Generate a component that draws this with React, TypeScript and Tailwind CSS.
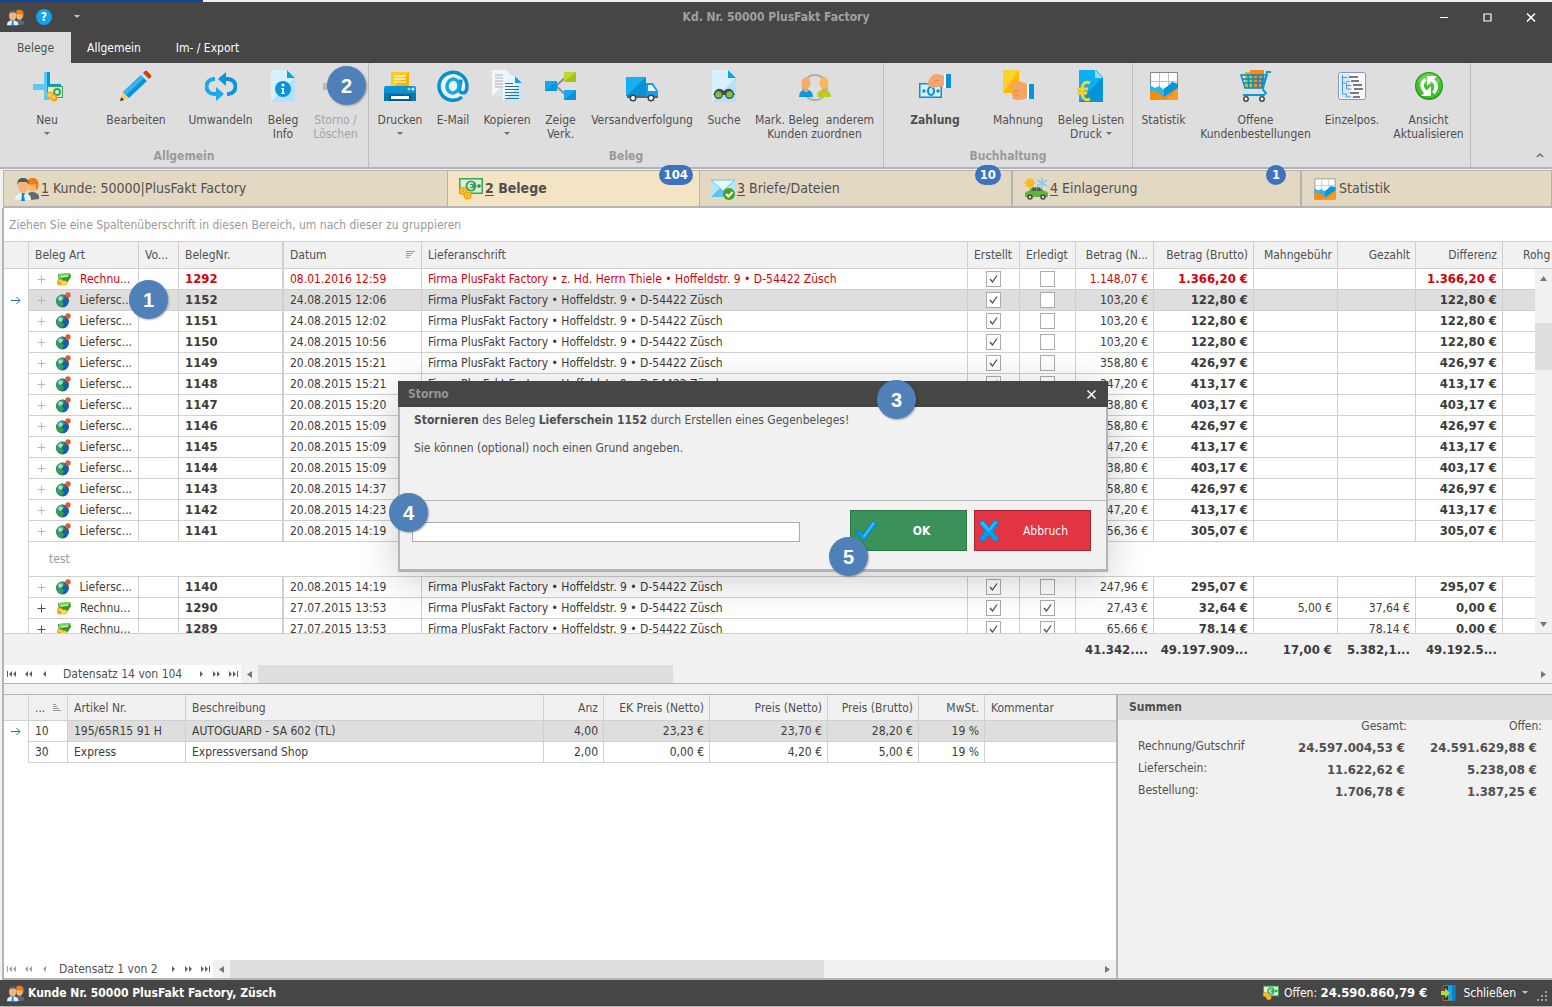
import type { ReactNode } from "react";

type Beleg = {
  art: "L" | "R";
  nr: string;
  datum: string;
  anschrift?: string;
  erledigt?: boolean;
  netto: string;
  brutto: string;
  mahn?: string;
  gezahlt?: string;
  diff: string;
  red?: boolean;
  note?: string;
};

const ADDRESS = "Firma PlusFakt Factory • Hoffeldstr. 9 • D-54422 Züsch";

const belege: Beleg[] = [
  { art: "R", nr: "1292", datum: "08.01.2016 12:59", anschrift: "Firma PlusFakt Factory • z. Hd. Herrn Thiele • Hoffeldstr. 9 • D-54422 Züsch", netto: "1.148,07 €", brutto: "1.366,20 €", diff: "1.366,20 €", red: true },
  { art: "L", nr: "1152", datum: "24.08.2015 12:06", netto: "103,20 €", brutto: "122,80 €", diff: "122,80 €" },
  { art: "L", nr: "1151", datum: "24.08.2015 12:02", netto: "103,20 €", brutto: "122,80 €", diff: "122,80 €" },
  { art: "L", nr: "1150", datum: "24.08.2015 10:56", netto: "103,20 €", brutto: "122,80 €", diff: "122,80 €" },
  { art: "L", nr: "1149", datum: "20.08.2015 15:21", netto: "358,80 €", brutto: "426,97 €", diff: "426,97 €" },
  { art: "L", nr: "1148", datum: "20.08.2015 15:21", netto: "347,20 €", brutto: "413,17 €", diff: "413,17 €" },
  { art: "L", nr: "1147", datum: "20.08.2015 15:20", netto: "338,80 €", brutto: "403,17 €", diff: "403,17 €" },
  { art: "L", nr: "1146", datum: "20.08.2015 15:09", netto: "358,80 €", brutto: "426,97 €", diff: "426,97 €" },
  { art: "L", nr: "1145", datum: "20.08.2015 15:09", netto: "347,20 €", brutto: "413,17 €", diff: "413,17 €" },
  { art: "L", nr: "1144", datum: "20.08.2015 15:09", netto: "338,80 €", brutto: "403,17 €", diff: "403,17 €" },
  { art: "L", nr: "1143", datum: "20.08.2015 14:37", netto: "358,80 €", brutto: "426,97 €", diff: "426,97 €" },
  { art: "L", nr: "1142", datum: "20.08.2015 14:23", netto: "347,20 €", brutto: "413,17 €", diff: "413,17 €" },
  { art: "L", nr: "1141", datum: "20.08.2015 14:19", netto: "256,36 €", brutto: "305,07 €", diff: "305,07 €", note: "test" },
  { art: "L", nr: "1140", datum: "20.08.2015 14:19", netto: "247,96 €", brutto: "295,07 €", diff: "295,07 €" },
  { art: "R", nr: "1290", datum: "27.07.2015 13:53", erledigt: true, netto: "27,43 €", brutto: "32,64 €", mahn: "5,00 €", gezahlt: "37,64 €", diff: "0,00 €" },
  { art: "R", nr: "1289", datum: "27.07.2015 13:53", erledigt: true, netto: "65,66 €", brutto: "78,14 €", gezahlt: "78,14 €", diff: "0,00 €" },
];

const positionen = [
  ["10", "195/65R15 91 H", "AUTOGUARD - SA 602 (TL)", "4,00", "23,23 €", "23,70 €", "28,20 €", "19 %"],
  ["30", "Express", "Expressversand Shop", "2,00", "0,00 €", "4,20 €", "5,00 €", "19 %"],
];

const summen = [
  ["Rechnung/Gutschrif", "24.597.004,53 €", "24.591.629,88 €"],
  ["Lieferschein:", "11.622,62 €", "5.238,08 €"],
  ["Bestellung:", "1.706,78 €", "1.387,25 €"],
];

/* ---------- icons ---------- */

function Icon({ size = 32, box = 32, children }: { size?: number; box?: number; children: ReactNode }) {
  return (
    <svg width={size} height={size} viewBox={`0 0 ${box} ${box}`} className="shrink-0" aria-hidden="true">
      {children}
    </svg>
  );
}

function PeopleIcon({ size }: { size: number }) {
  return (
    <Icon size={size} box={24}>
      <path d="M12 20c0-4 3-5 5-5s7 1 7 5v2l-8 1z" fill="#5d6d75" />
      <ellipse cx="17.500" cy="9" rx="4.500" ry="6" fill="#f9b76f" />
      <path d="M12 6c0-4 3-5 6-5s6 2 5.500 7c0 3-1 5-2.500 5 .5-3 0-5-1-6-3 1-6 1-8-1z" fill="#f57c14" />
      <path d="M0 23c0-5 3-7 8-7s8 2 8 7z" fill="#e4f1fa" />
      <path d="M6.500 16h3.500l-1 2.500L10 24H6l1-5.500z" fill="#0b8ed0" />
      <ellipse cx="8" cy="9.500" rx="5" ry="6.500" fill="#f7b57c" />
      <path d="M2.500 8C2 3 4 1 8 1s6 2 5.500 7l-1.500-3c-3 0-6 0-8 0z" fill="#4a5a60" />
    </Icon>
  );
}

function MoneyIcon({ size }: { size: number }) {
  return (
    <Icon size={size} box={24}>
      <path d="M0 1h24v16H0z" fill="#3aa457" />
      <path d="M1.500 2.500h21v13h-21z" fill="#d8f0d4" />
      <circle cx="12" cy="9" r="5.500" fill="#3aa457" />
      <path d="M14 6.500a3 3 0 1 0 0 5M9 9h4" stroke="#fff" strokeWidth="1.300" fill="none" />
      <circle cx="20" cy="9" r="1.800" fill="#2c8a46" />
      <circle cx="4" cy="14" r="4" fill="#f6a609" />
      <circle cx="4" cy="14" r="2.500" fill="#fcd04a" />
      <circle cx="8.500" cy="18.500" r="4" fill="#f6a609" />
      <circle cx="8.500" cy="18.500" r="2.500" fill="#fcd04a" />
      <path d="M4 12.500v3M8.500 17v3" stroke="#e08a00" />
    </Icon>
  );
}

function ChartIcon({ size }: { size: number }) {
  return (
    <Icon size={size}>
      <path d="M2.500 2.500h27v27h-27z" fill="#fff" stroke="#7c8a94" />
      <path d="M11.500 3v15M20.500 3v15M3 11.500h26" stroke="#b7c3cc" />
      <path d="M2 15l5 3 4-2 4 3 5-3 4-4 6 2v13H2z" fill="#2fb3f0" />
      <path d="M2 21h6l4 3 4 3 6-3 4-4 4-2v12H2z" fill="#ff8c00" />
      <path d="M16 19l4-3 4-4 6 2v4l-5 3-4 2-5 4z" fill="#0995dd" />
      <path d="M18 30l12-12v12z" fill="#fa9d1c" />
    </Icon>
  );
}

function NeuIcon() {
  return (
    <Icon>
      <path d="M2 14h28v6H2z" fill="#5cc8f7" />
      <path d="M13 2h6v28h-6z" fill="#5cc8f7" />
      <path d="M16 2h3v12h11v3H16z" fill="#0596dd" />
      <path d="M16 16h16v12H16z" fill="#3aa457" />
      <path d="M17 17h14v10H17z" fill="#d8f0d4" />
      <circle cx="26" cy="22" r="4" fill="#3aa457" />
      <circle cx="26" cy="22" r="2" fill="#d8f0d4" />
      <circle cx="19" cy="25" r="3.500" fill="#f6b21a" />
      <circle cx="23" cy="28" r="3.500" fill="#f6a609" />
      <circle cx="22.500" cy="27.500" r="2" fill="#fcd04a" />
      <circle cx="19" cy="25" r="2" fill="#fcd04a" />
    </Icon>
  );
}

function PencilIcon() {
  return (
    <Icon>
      <path d="M0 31l3-9 6 6z" fill="#f6cf6b" />
      <path d="M0 31l1.200-4 3 3z" fill="#3d3d3d" />
      <path d="M3 22L21 5l6 6L9 28z" fill="#0b92d8" />
      <path d="M3 22L21 5l3 3L6 25z" fill="#35b6f2" />
      <path d="M21 5l2-2 6 6-2 2z" fill="#cfe0ea" />
      <path d="M23 3l2-2q1-1 2 0l4 4q1 1 0 2l-2 2z" fill="#c9410f" />
    </Icon>
  );
}

function ConvertIcon() {
  return (
    <Icon>
      <path d="M10 9H9a7 7 0 0 0 0 15h3" fill="none" stroke="#19a9f0" strokeWidth="4" />
      <path d="M20 9h3a7 7 0 0 1 0 15h-1" fill="none" stroke="#0a94dc" strokeWidth="4" />
      <path d="M13 9l8-7v14z" fill="#0a94dc" />
      <path d="M19 24l-8-7v14z" fill="#19a9f0" />
    </Icon>
  );
}

function InfoDocIcon() {
  return (
    <Icon>
      <path d="M4 0h17l7 7v25H4z" fill="#d9f1fd" />
      <path d="M28 7v25H4z" fill="#b2e2fa" />
      <path d="M20 0l8 8h-8z" fill="#12a0e8" />
      <circle cx="16" cy="19" r="8" fill="#0a94dc" />
      <circle cx="16" cy="15" r="1.500" fill="#fff" />
      <path d="M14 18h3v5h1v1h-4v-1h1v-4h-1z" fill="#fff" />
    </Icon>
  );
}

function MinusIcon() {
  return (
    <Icon>
      <path d="M3 13h26v7H3z" fill="#b9b9b9" />
    </Icon>
  );
}

function PrinterIcon() {
  return (
    <Icon>
      <path d="M7 2h18v16H7z" fill="#ffc91f" />
      <path d="M25 2v16H10z" fill="#f5b200" />
      <path d="M10 6h12M10 9h12M10 12h12" stroke="#fff3c4" strokeWidth="1.500" />
      <path d="M2 16h5v-2h18v2h5a2 2 0 0 1 2 2v13H0V18a2 2 0 0 1 2-2z" fill="#0793da" />
      <path d="M7 2h18v14H7z" fill="#ffc91f" />
      <path d="M25 2v14H11z" fill="#f5b200" />
      <path d="M10 6h12M10 9h12M10 12h12" stroke="#fff3c4" strokeWidth="1.500" />
      <path d="M0 23h32v8H0z" fill="#0877ae" />
      <path d="M5 25h22v6H5z" fill="#0a5a87" />
      <path d="M7 26h18v3H7z" fill="#fff" />
      <circle cx="25" cy="19" r="1.500" fill="#b6e04a" />
      <circle cx="29" cy="19" r="1.500" fill="#dff6ff" />
    </Icon>
  );
}

function AtIcon() {
  return (
    <Icon>
      <circle cx="16" cy="16" r="14" fill="#e8f6fd" />
      <path d="M25 27a14 14 0 1 1 5-11c0 5-2 7-4.500 7S22 21 22.500 18.500L24 9.500" fill="none" stroke="#0a8fd2" strokeWidth="3.500" />
      <ellipse cx="16" cy="16" rx="6" ry="7" fill="none" stroke="#1ba5e6" strokeWidth="3.500" transform="rotate(12 16 16)" />
    </Icon>
  );
}

function CopyIcon() {
  return (
    <Icon>
      <path d="M1 0h14l6 6v20H1z" fill="#f3f5f7" />
      <path d="M21 6v20H1z" fill="#dfe4e8" />
      <path d="M4 5h8M4 8h8M4 11h8M4 14h8M4 17h8" stroke="#a6afb5" />
      <path d="M12 6h13l6 6v20H12z" fill="#e8f7ff" />
      <path d="M31 12v20H12z" fill="#bfe8fb" />
      <path d="M24 6l7 7h-7z" fill="#12a0e8" />
      <path d="M14 13.500h8M14 16.500h14M14 19.500h14M14 22.500h14M14 25.500h14M14 28.500h14" stroke="#34718f" />
    </Icon>
  );
}

function TreeIcon() {
  return (
    <Icon>
      <path d="M22 6L11 16l11 10" fill="none" stroke="#8a8a8a" strokeWidth="2" />
      <path d="M0 11h12v10H0z" fill="#18a7ee" />
      <path d="M12 11v10H0z" fill="#0793da" />
      <path d="M19 2h12v10H19z" fill="#b9d92b" />
      <path d="M31 2v10H19z" fill="#a0c514" />
      <path d="M19 20h12v10H19z" fill="#18a7ee" />
      <path d="M31 20v10H19z" fill="#0793da" />
    </Icon>
  );
}

function TruckIcon() {
  return (
    <Icon>
      <path d="M0 7h20v19H0z" fill="#0793da" />
      <path d="M0 7h20L0 26z" fill="#18b0f3" />
      <path d="M20 13h7l5 8v6H20z" fill="#12a0e8" />
      <path d="M22 15h4l4 6h-8z" fill="#e5f6fe" />
      <path d="M1 26h31v2H1z" fill="#56646c" />
      <circle cx="7" cy="28" r="3.500" fill="#3b4449" />
      <circle cx="7" cy="28" r="2" fill="#fff" />
      <circle cx="25" cy="28" r="3.500" fill="#3b4449" />
      <circle cx="25" cy="28" r="2" fill="#fff" />
    </Icon>
  );
}

function SearchDocIcon() {
  return (
    <Icon>
      <path d="M4 0h17l7 7v25H4z" fill="#d9f1fd" />
      <path d="M28 7v25H4z" fill="#b2e2fa" />
      <path d="M20 0l8 8h-8z" fill="#12a0e8" />
      <path d="M8 20q4-3 8 1 4-4 8-1l3 5H5z" fill="#3e4c54" />
      <circle cx="10.500" cy="24.500" r="4.500" fill="#3e4c54" />
      <circle cx="21.500" cy="24.500" r="4.500" fill="#3e4c54" />
      <circle cx="10.500" cy="24.500" r="3.200" fill="#83bd3c" />
      <circle cx="21.500" cy="24.500" r="3.200" fill="#83bd3c" />
    </Icon>
  );
}

function AssignIcon() {
  return (
    <Icon>
      <ellipse cx="16" cy="17.500" rx="12" ry="12.500" fill="none" stroke="#adadad" strokeWidth="2" />
      <path d="M0 27q0-6 5-7h4q5 1 5 7z" fill="#0c98de" />
      <path d="M18 27q0-6 5-7h4q5 1 5 7z" fill="#b4cf1f" />
      <path d="M5 17h4v5H5zM23 17h4v5h-4z" fill="#ef9e57" />
      <ellipse cx="7" cy="13" rx="4.500" ry="6" fill="#f6ad6b" />
      <ellipse cx="25" cy="13" rx="4.500" ry="6" fill="#f6b85c" />
    </Icon>
  );
}

function PaymentIcon() {
  return (
    <Icon>
      <path d="M0 13h23v15H0z" fill="#0d8fcb" />
      <path d="M1.500 14.500h20v12h-20z" fill="#d7effa" />
      <ellipse cx="12" cy="21" rx="4" ry="5" fill="#0d8fcb" />
      <ellipse cx="12" cy="21" rx="2" ry="3" fill="#d7effa" />
      <circle cx="5" cy="21" r="1.700" fill="#0d8fcb" />
      <circle cx="19" cy="21" r="1.700" fill="#0d8fcb" />
      <path d="M8 15q3-10 9-11 5 0 8 2v9q-3 2-7 2l-5 1q-2 0-1-3-2 2-4 0z" fill="#f2a86b" />
      <path d="M13 15l4-5 3 1" fill="none" stroke="#de8a48" />
      <path d="M25 4h2v14h-2z" fill="#fff" />
      <path d="M27 4h5v14h-5z" fill="#0793da" />
    </Icon>
  );
}

function ReminderIcon() {
  return (
    <Icon>
      <path d="M1 0h16v23H1z" fill="#fdb900" />
      <path d="M17 0L1 23V0z" fill="#fdd02a" />
      <path d="M8 14l8-3q8 2 11 4v11q-4 4-10 4-7 0-7-3l3-2h-3q-2-3 1-4h4q-4-3-7-3z" fill="#f4a564" />
      <path d="M11 21h6M10 25h7" stroke="#de8a48" />
      <path d="M25 14h2v15h-2z" fill="#fff" />
      <path d="M27 14h5v15h-5z" fill="#0793da" />
    </Icon>
  );
}

function EuroDocIcon() {
  return (
    <Icon>
      <path d="M4 0h17l7 7v25H4z" fill="#0bb0f2" />
      <path d="M28 7v25H4z" fill="#0793da" />
      <path d="M20 0l8 8h-8z" fill="#9cdcf8" />
      <path d="M15 13q-8-3-8 8t8 8M2 19h11M2 23h10" fill="none" stroke="#ffd21f" strokeWidth="3" />
    </Icon>
  );
}

function CartIcon() {
  return (
    <Icon>
      <path d="M5 2h9v16H5z" fill="#9ad04a" />
      <path d="M10 0h14v18H10z" fill="#f58a1f" />
      <path d="M5 6h8v12H6z" fill="#9ad04a" />
      <path d="M1 5h26l-4 13H5zM3 9h23M4 13h21M8 5l1 13M13 5v13M18 5v13M23 5l-1 13" fill="none" stroke="#0e86c2" strokeWidth="1.500" />
      <path d="M31 2h-4l-4 16q0 3 2 4t-1 3H3" fill="none" stroke="#0a98dd" strokeWidth="2" />
      <circle cx="6" cy="29" r="2.200" fill="#fff" stroke="#444" strokeWidth="1.500" />
      <circle cx="22" cy="29" r="2.200" fill="#fff" stroke="#444" strokeWidth="1.500" />
    </Icon>
  );
}

function ListIcon() {
  return (
    <Icon>
      <rect x="2.500" y="2.500" width="27" height="27" rx="2" fill="#f8fbff" stroke="#7e97c3" />
      <path d="M4 4h10v24H4z" fill="#d6e8fb" />
      <path d="M6.500 5v19h4M6.500 7.500h5M6.500 13h4v6h5M10.500 11.500h3M10.500 15.500h5M10.500 24v3h5" fill="none" stroke="#4f9fe0" />
      <path d="M13 7h9M15 11h8M17 15h9M18 19h9M14 23h9M17 27h7" stroke="#7b7b7b" strokeWidth="2" />
    </Icon>
  );
}

function RefreshIcon() {
  return (
    <Icon>
      <circle cx="16" cy="16" r="14" fill="#1f9c1a" />
      <circle cx="16" cy="15.500" r="12.800" fill="#43c02a" />
      <path d="M5 12a11.500 11.500 0 0 1 22 0q-11 6-22 0z" fill="#8be36d" opacity=".5" />
      <path d="M12.500 9q-7 6 0 13" fill="none" stroke="#fff" strokeWidth="3.500" />
      <path d="M8 26h10V16z" fill="#fff" />
      <path d="M20.500 23q6-7-1-13" fill="none" stroke="#fff" strokeWidth="3.500" />
      <path d="M24 6H14v10z" fill="#fff" />
    </Icon>
  );
}

function MailIcon() {
  return (
    <Icon size={24} box={24}>
      <path d="M0 3h24v17H0z" fill="#b6e6fc" />
      <path d="M0 20l9-9h6l9 9z" fill="#5cc3f3" />
      <path d="M0 3h24L12 14z" fill="#e8f8ff" stroke="#67c3ee" />
      <circle cx="18" cy="17" r="6" fill="#4ba31f" />
      <path d="M15 17l2.500 2.500L21.500 15" fill="none" stroke="#fff" strokeWidth="2" />
    </Icon>
  );
}

function CarIcon() {
  return (
    <Icon size={24} box={24}>
      <circle cx="6" cy="6" r="4" fill="#fdb813" />
      <path d="M6 0v12M0 6h12M2 2l8 8M10 2l-8 8" stroke="#fdb813" />
      <path d="M18 0v11M13 3l10 6M23 3l-10 6" stroke="#86cdf0" strokeWidth="1.500" />
      <path d="M1 16q1-2 4-2l3-4h8l4 4q4 0 4 3v3H1z" fill="#5fb53a" />
      <path d="M7 14l2-3h3v3zM13 11h2.500l3 3H13z" fill="#4b5a60" />
      <circle cx="6" cy="20" r="2.800" fill="#4b4b4b" />
      <circle cx="19" cy="20" r="2.800" fill="#4b4b4b" />
      <circle cx="6" cy="20" r="1.200" fill="#ddd" />
      <circle cx="19" cy="20" r="1.200" fill="#ddd" />
    </Icon>
  );
}

function GlobeIcon() {
  return (
    <Icon size={16} box={16}>
      <circle cx="6.500" cy="9" r="6.500" fill="#1560ad" />
      <path d="M1 6q3-4 6-3.500l2 3-4 3 3 3-2 3.500Q0 13 0 9z" fill="#35a04a" />
      <circle cx="4.500" cy="6.500" r="2.300" fill="#c9efff" opacity=".75" />
      <circle cx="12" cy="3" r="2.700" fill="#dd5b31" />
      <path d="M11 5L9 8" stroke="#b03a1c" />
    </Icon>
  );
}

function InvoiceIcon() {
  return (
    <Icon size={16} box={16}>
      <path d="M2 3l12-1 1 4-4 6-8-1z" fill="#2f9a25" />
      <path d="M3 3l11-1-2 4-9 1z" fill="#7bd85a" />
      <path d="M5 6l7-1" stroke="#e2ffd6" />
      <ellipse cx="4" cy="11" rx="3" ry="3.500" fill="#e2a90c" />
      <ellipse cx="8" cy="12" rx="3.500" ry="2.500" fill="#f3c832" />
      <path d="M2 10h4M6 12h4" stroke="#fff0a0" />
    </Icon>
  );
}

function DoorIcon() {
  return (
    <Icon size={16} box={16}>
      <path d="M2 .5h12v15H2z" fill="#3b3b3b" stroke="#a8622a" />
      <path d="M7 1l7-1v16l-7-1z" fill="#12a5ee" />
      <path d="M11 0h3v16h-3z" fill="#0a84c6" />
      <path d="M0 6h4V3l5 5-5 5v-3H0z" fill="#b9d92b" />
    </Icon>
  );
}

function Caret({ light = false }: { light?: boolean }) {
  return (
    <svg width="6" height="4" viewBox="0 0 6 4" className={light ? "text-[#c8c8c8]" : "text-[#6e6e6e]"} aria-hidden="true">
      <path d="M0 0h6L3 3z" fill="currentColor" />
    </svg>
  );
}

function RowArrow() {
  return (
    <svg width="10" height="9" viewBox="0 0 10 9" className="mx-auto" aria-hidden="true">
      <path d="M0 4.500h9M5.500 1L9 4.500 5.500 8" fill="none" stroke="#2a72b8" />
    </svg>
  );
}

/* ---------- ribbon ---------- */

function RibbonButton({
  icon,
  lines,
  className,
  caret,
  bold,
  disabled,
}: {
  icon: ReactNode;
  lines: string[];
  className: string;
  caret?: boolean;
  bold?: boolean;
  disabled?: boolean;
}) {
  return (
    <button
      disabled={disabled}
      className={`${className} flex shrink-0 flex-col items-center pt-[7px] leading-[14px] whitespace-pre ${bold ? "font-bold" : ""} ${disabled ? "text-[#a3a3a3]" : "text-[#505050]"}`}
    >
      {icon}
      <span className="mt-[11px]">{lines[0]}</span>
      {lines[1] ? (
        <span className="flex items-center gap-1">
          {lines[1]}
          {caret && <Caret />}
        </span>
      ) : (
        caret && <span className="mt-[5px]"><Caret /></span>
      )}
    </button>
  );
}

function RibbonGroup({ label, children }: { label?: string; children: ReactNode }) {
  return (
    <section className="flex shrink-0 flex-col justify-between border-r border-[#bdbdbd]">
      <div className="flex">{children}</div>
      <div className="h-[18px] text-center leading-[14px] font-bold text-[#9a9a9a]">{label}</div>
    </section>
  );
}

function Ribbon() {
  return (
    <div className="relative flex h-[104px] overflow-hidden bg-[#dedede]">
      <RibbonGroup label="Allgemein">
        <RibbonButton className="w-[94px]" icon={<NeuIcon />} lines={["Neu"]} caret />
        <RibbonButton className="w-[84px]" icon={<PencilIcon />} lines={["Bearbeiten"]} />
        <RibbonButton className="w-[85px]" icon={<ConvertIcon />} lines={["Umwandeln"]} />
        <RibbonButton className="w-[40px]" icon={<InfoDocIcon />} lines={["Beleg", "Info"]} />
        <RibbonButton className="w-[65px]" icon={<MinusIcon />} lines={["Storno /", "Löschen"]} disabled />
      </RibbonGroup>
      <RibbonGroup label="Beleg">
        <RibbonButton className="w-[62px]" icon={<PrinterIcon />} lines={["Drucken"]} caret />
        <RibbonButton className="w-[44px]" icon={<AtIcon />} lines={["E-Mail"]} />
        <RibbonButton className="w-[64px]" icon={<CopyIcon />} lines={["Kopieren"]} caret />
        <RibbonButton className="w-[43px]" icon={<TreeIcon />} lines={["Zeige", "Verk."]} />
        <RibbonButton className="w-[120px]" icon={<TruckIcon />} lines={["Versandverfolgung"]} />
        <RibbonButton className="w-[44px]" icon={<SearchDocIcon />} lines={["Suche"]} />
        <RibbonButton className="w-[137px]" icon={<AssignIcon />} lines={["Mark. Beleg  anderem", "Kunden zuordnen"]} />
      </RibbonGroup>
      <RibbonGroup label="Buchhaltung">
        <RibbonButton className="w-[102px]" icon={<PaymentIcon />} lines={["Zahlung"]} bold />
        <RibbonButton className="w-[64px]" icon={<ReminderIcon />} lines={["Mahnung"]} />
        <RibbonButton className="w-[82px]" icon={<EuroDocIcon />} lines={["Beleg Listen", "Druck"]} caret />
      </RibbonGroup>
      <RibbonGroup>
        <RibbonButton className="w-[61px]" icon={<ChartIcon size={32} />} lines={["Statistik"]} />
        <RibbonButton className="w-[123px]" icon={<CartIcon />} lines={["Offene", "Kundenbestellungen"]} />
        <RibbonButton className="w-[70px]" icon={<ListIcon />} lines={["Einzelpos."]} />
        <RibbonButton className="w-[83px]" icon={<RefreshIcon />} lines={["Ansicht", "Aktualisieren"]} />
      </RibbonGroup>
      <button className="ml-auto self-end p-2 pb-[10px]" aria-label="Menüband minimieren">
        <svg width="8" height="5" viewBox="0 0 8 5">
          <path d="M0 5l4-4 4 4H6L4 3 2 5z" fill="#6e6e6e" />
        </svg>
      </button>
    </div>
  );
}

/* ---------- page tabs ---------- */

function PageTab({
  icon,
  num,
  label,
  badge,
  active,
  className,
  badgeClass = "",
}: {
  icon: ReactNode;
  num?: string;
  label: string;
  badge?: string;
  active?: boolean;
  className: string;
  badgeClass?: string;
}) {
  return (
    <button
      className={`${className} relative flex items-center gap-[2px] border-t border-b-2 border-[#b4b4b4] pl-[11px] text-[14px] text-[#505050] ${active ? "bg-[#f5e4c3] font-bold" : "bg-[#e3d8c2]"}`}
    >
      {icon}
      <span>
        {num && <span className="underline underline-offset-2">{num}</span>}
        {num && " "}
        {label}
      </span>
      {badge && (
        <span className={`absolute -top-[6px] grid h-5 min-w-5 place-items-center rounded-full bg-[#3c72c0] px-[5px] text-[13px] font-bold text-white ${badgeClass}`}>
          {badge}
        </span>
      )}
    </button>
  );
}

/* ---------- grids ---------- */

const th = "border-r border-b border-[#d0d0d0] bg-[#f1f1f1] px-[6px] font-normal text-[#505050] overflow-hidden whitespace-nowrap";
const td = "border-r border-b border-[#d0d0d0] px-[6px] overflow-hidden whitespace-nowrap";
const num = "text-right pr-[5px]";
const strong = "text-[13px] leading-[18px] font-bold";

function Check({ checked, label }: { checked: boolean; label: string }) {
  return (
    <span className="relative mx-auto block h-4 w-[15px]">
      <input type="checkbox" aria-label={label} defaultChecked={checked} className="peer block h-4 w-[15px] appearance-none border border-[#ababab] bg-white" />
      <svg viewBox="0 0 15 16" className="pointer-events-none absolute inset-0 hidden h-4 w-[15px] peer-checked:block">
        <path d="M4 8l2.500 3L11 4.500" fill="none" stroke="#505050" strokeWidth="1.300" />
      </svg>
    </span>
  );
}

function BelegRow({ b, selected }: { b: Beleg; selected: boolean }) {
  const cell = `${td} ${selected ? "bg-[#dedede]" : ""}`;
  return (
    <>
      <tr className={`h-[21px] ${b.red ? "text-[#d8000c]" : "text-[#3c3c3c]"}`}>
        <td className="border-r border-[#d0d0d0]">{selected && <RowArrow />}</td>
        <td className={cell}>
          <span className="flex items-center">
            <svg width="13" height="9" viewBox="0 0 13 9" className={b.art === "R" && !b.red ? "text-[#505050]" : "text-[#b8b8b8]"}>
              <path d="M2.500 4.500h8M6.500.5v8" stroke="currentColor" />
            </svg>
            <span className="ml-2 flex w-6">{b.art === "R" ? <InvoiceIcon /> : <GlobeIcon />}</span>
            {b.art === "R" ? "Rechnu..." : "Liefersc..."}
          </span>
        </td>
        <td className={cell} />
        <td className={`${cell} ${strong} border-r-2`}>{b.nr}</td>
        <td className={cell}>{b.datum}</td>
        <td className={cell}>{b.anschrift ?? ADDRESS}</td>
        <td className={cell}><Check checked label={`${b.nr} erstellt`} /></td>
        <td className={cell}><Check checked={!!b.erledigt} label={`${b.nr} erledigt`} /></td>
        <td className={`${cell} ${num}`}>{b.netto}</td>
        <td className={`${cell} ${num} ${strong}`}>{b.brutto}</td>
        <td className={`${cell} ${num}`}>{b.mahn}</td>
        <td className={`${cell} ${num}`}>{b.gezahlt}</td>
        <td className={`${cell} ${num} ${strong}`}>{b.diff}</td>
        <td className={cell} />
      </tr>
      {b.note && (
        <tr className="h-[35px] text-[#9a9a9a]">
          <td className="border-r border-[#d0d0d0]" />
          <td colSpan={13} className="border-b border-[#d0d0d0] pl-5">{b.note}</td>
        </tr>
      )}
    </>
  );
}

function MainCols() {
  return (
    <colgroup>
      <col className="w-[25px]" />
      <col className="w-[110px]" />
      <col className="w-[40px]" />
      <col className="w-[105px]" />
      <col className="w-[138px]" />
      <col />
      <col className="w-[52px]" />
      <col className="w-[56px]" />
      <col className="w-[78px]" />
      <col className="w-[100px]" />
      <col className="w-[84px]" />
      <col className="w-[78px]" />
      <col className="w-[87px]" />
      <col className="w-[49px]" />
    </colgroup>
  );
}

function BelegGrid() {
  return (
    <div className="relative h-[391px] overflow-hidden bg-white">
      <table className="w-full table-fixed border-separate border-spacing-0 text-left">
        <MainCols />
        <thead>
          <tr className="h-[27px]">
            <th className={th} />
            <th className={th}>Beleg Art</th>
            <th className={th}>Vo...</th>
            <th className={`${th} border-r-2`}>BelegNr.</th>
            <th className={th}>
              <span className="flex items-center justify-between">
                Datum
                <svg width="9" height="8" viewBox="0 0 9 8">
                  <path d="M0 .5h9M0 2.500h7M0 4.500h5M0 6.500h3" stroke="#9a9a9a" />
                </svg>
              </span>
            </th>
            <th className={th}>Lieferanschrift</th>
            <th className={th}>Erstellt</th>
            <th className={th}>Erledigt</th>
            <th className={`${th} ${num}`}>Betrag (N...</th>
            <th className={`${th} ${num}`}>Betrag (Brutto)</th>
            <th className={`${th} ${num}`}>Mahngebühr</th>
            <th className={`${th} ${num}`}>Gezahlt</th>
            <th className={`${th} ${num}`}>Differenz</th>
            <th className="overflow-hidden border-b border-[#d0d0d0] bg-[#f1f1f1] pl-5 font-normal whitespace-nowrap text-[#505050]">Rohg</th>
          </tr>
        </thead>
        <tbody>
          {belege.map((b, i) => (
            <BelegRow key={b.nr} b={b} selected={i === 1} />
          ))}
        </tbody>
      </table>
      <div className="absolute top-[27px] right-0 bottom-0 flex w-[17px] flex-col items-center bg-[#f1f1f1]">
        <svg width="7" height="5" viewBox="0 0 7 5" className="mt-[7px]"><path d="M3.500 0L7 5H0z" fill="#777" /></svg>
        <div className="mt-[42px] h-[47px] w-full bg-[#dedede]" />
        <svg width="7" height="5" viewBox="0 0 7 5" className="mt-auto mb-[6px]"><path d="M0 0h7L3.500 5z" fill="#777" /></svg>
      </div>
    </div>
  );
}

function NavButton({ d, label, dim }: { d: string; label: string; dim?: boolean }) {
  return (
    <button aria-label={label} className={`grid h-full w-4 place-items-center ${dim ? "text-[#a0a0a0]" : "text-[#606060]"}`}>
      <svg width="10" height="6" viewBox="0 0 10 6"><path d={d} fill="currentColor" /></svg>
    </button>
  );
}

function Navigator({ text, dim, thumb, pad }: { text: string; dim?: boolean; thumb: string; pad: string }) {
  return (
    <div className="flex h-[18px] bg-[#f1f1f1] text-[#505050]">
      <div className="flex items-center bg-white">
        <NavButton label="Erster" dim={dim} d="M0 0h1v6H0zM5 0v6L2 3zM9 0v6L6 3z" />
        <NavButton label="Vorige Seite" dim={dim} d="M5 0v6L2 3zM9 0v6L6 3z" />
        <NavButton label="Voriger" dim={dim} d="M7 0v6L4 3z" />
        <span className={`${pad} leading-[18px]`}>{text}</span>
        <NavButton label="Nächster" d="M4 0v6l3-3z" />
        <NavButton label="Nächste Seite" d="M1 0v6l3-3zM5 0v6l3-3z" />
        <NavButton label="Letzter" d="M1 0v6l3-3zM5 0v6l3-3zM9 0h1v6H9z" />
      </div>
      <div className="flex flex-1 items-center">
        <svg width="5" height="7" viewBox="0 0 5 7" className="mx-[6px]"><path d="M5 0v7L0 3.500z" fill="#777" /></svg>
        <div className={`${thumb} h-full bg-[#dedede]`} />
        <svg width="5" height="7" viewBox="0 0 5 7" className="mr-[6px] ml-auto"><path d="M0 0v7l5-3.500z" fill="#777" /></svg>
      </div>
    </div>
  );
}

function DetailGrid() {
  return (
    <table className="w-full table-fixed border-separate border-spacing-0 text-left">
      <colgroup>
        <col className="w-[25px]" />
        <col className="w-[39px]" />
        <col className="w-[118px]" />
        <col />
        <col className="w-[60px]" />
        <col className="w-[106px]" />
        <col className="w-[118px]" />
        <col className="w-[91px]" />
        <col className="w-[66px]" />
        <col className="w-[131px]" />
      </colgroup>
      <thead>
        <tr className="h-[26px]">
          <th className={th} />
          <th className={th}>
            <span className="flex items-center justify-between">
              ...
              <svg width="8" height="8" viewBox="0 0 8 8">
                <path d="M0 .5h3M0 2.500h4M0 4.500h6M0 6.500h8" stroke="#9a9a9a" />
              </svg>
            </span>
          </th>
          <th className={th}>Artikel Nr.</th>
          <th className={th}>Beschreibung</th>
          <th className={`${th} ${num}`}>Anz</th>
          <th className={`${th} ${num}`}>EK Preis (Netto)</th>
          <th className={`${th} ${num}`}>Preis (Netto)</th>
          <th className={`${th} ${num}`}>Preis (Brutto)</th>
          <th className={`${th} ${num}`}>MwSt.</th>
          <th className={`${th} border-r-0`}>Kommentar</th>
        </tr>
      </thead>
      <tbody className="text-[#3c3c3c]">
        {positionen.map((p, r) => (
          <tr key={p[0]} className="h-[21px]">
            <td className="border-r border-[#d0d0d0]">{r === 0 && <RowArrow />}</td>
            {p.map((v, c) => (
              <td key={c} className={`${td} ${c > 2 ? num : ""} ${r === 0 && c > 0 ? "bg-[#dedede]" : ""}`}>{v}</td>
            ))}
            <td className={`border-b border-[#d0d0d0] ${r === 0 ? "bg-[#dedede]" : ""}`} />
          </tr>
        ))}
      </tbody>
    </table>
  );
}

function SummenPanel() {
  return (
    <aside className="w-[436px] shrink-0 border-l-2 border-[#b4b4b4] text-[#505050]">
      <h2 className="h-[25px] bg-[#dedede] pl-[11px] leading-[25px] font-bold">Summen</h2>
      <table className="w-full border-separate border-spacing-0 text-right">
        <thead>
          <tr className="h-[17px] align-top leading-[13px]">
            <td />
            <th className="pr-[10px] font-normal">Gesamt:</th>
            <th className="pr-[10px] font-normal">Offen:</th>
          </tr>
        </thead>
        <tbody>
          {summen.map(([label, gesamt, offen]) => (
            <tr key={label} className="h-[22px]">
              <th className="w-[154px] pb-1 pl-5 text-left font-normal leading-[16px]">{label}</th>
              <td className={`pr-3 ${strong}`}>{gesamt}</td>
              <td className={`w-[135px] pr-[15px] ${strong}`}>{offen}</td>
            </tr>
          ))}
        </tbody>
      </table>
    </aside>
  );
}

/* ---------- storno dialog ---------- */

function StornoDialog() {
  return (
    <div
      role="dialog"
      aria-label="Storno"
      className="absolute top-[381px] left-[398px] z-10 w-[710px] border-2 border-t-0 border-b-[3px] border-[#b4b4b4] bg-[#f1f1f1] text-[#505050] shadow-[0_8px_40px_rgba(0,0,0,0.2)]"
    >
      <div className="-mx-[2px] flex h-[26px] items-center justify-between bg-[#464646] pr-3 pl-[10px]">
        <span className="font-bold text-[#969696]">Storno</span>
        <button aria-label="Dialog schließen">
          <svg width="9" height="9" viewBox="0 0 9 9"><path d="M.5.5l8 8M8.500.5l-8 8" stroke="#fff" strokeWidth="1.500" /></svg>
        </button>
      </div>
      <div className="h-[94px] border-b border-[#b4b4b4] pt-[5px] pl-[14px] leading-[16px]">
        <p>
          <b>Stornieren</b> des Beleg <b>Lieferschein 1152</b> durch Erstellen eines Gegenbeleges!
        </p>
        <label htmlFor="grund" className="mt-3 block">Sie können (optional) noch einen Grund angeben.</label>
      </div>
      <div className="flex h-[68px] items-start pt-[9px] pr-[15px] pl-3">
        <input id="grund" className="mt-[12px] h-5 w-[388px] border border-[#ababab] bg-white px-1" />
        <button className="relative ml-auto h-[41px] w-[117px] border border-[#2f7446] bg-[#3b915a] pl-[26px] font-bold text-white">
          <svg width="24" height="24" viewBox="0 0 24 24" className="absolute top-2 left-[3px]">
            <path d="M1 13l4-2 4 4L19 2l4 2L10 22z" fill="#0a9be6" stroke="#0c7fc0" />
            <path d="M9 17L19 3l2 1L10 19z" fill="#36bdf8" />
          </svg>
          OK
        </button>
        <button className="relative ml-[7px] h-[41px] w-[117px] border border-[#a82530] bg-[#e23442] pl-[26px] text-white">
          <svg width="24" height="24" viewBox="0 0 24 24" className="absolute top-2 left-[3px]">
            <path d="M1 4l4-3 6 7 6-7 4 3-6 8 6 8-4 3-6-7-6 7-4-3 6-8z" fill="#0a9be6" stroke="#0c7fc0" />
            <path d="M2 4l3-2 6 8 6-8 2 1-8 10z" fill="#2fb8f6" />
          </svg>
          Abbruch
        </button>
      </div>
    </div>
  );
}

function Step({ n, className }: { n: number; className: string }) {
  return (
    <span className={`${className} absolute z-20 grid size-[39px] place-items-center rounded-full bg-[#4f81b8] font-['Liberation_Sans',sans-serif] text-[20px] font-bold text-white shadow-[1px_1px_2px_rgba(0,0,0,0.3)]`}>
      {n}
    </span>
  );
}

export default function App() {
  return (
    <div className="relative flex min-h-screen flex-col overflow-hidden bg-[#f1f1f1] font-['DejaVu_Sans_Condensed','Noto_Sans',sans-serif] text-[12px]">
      <div className="flex h-[2px]">
        <div className="w-[203px] bg-[#0846a0]" />
        <div className="flex-1 bg-[#f0f0f0]" />
      </div>

      <header className="bg-[#464646] text-white">
        <div className="relative flex h-[30px] items-center justify-center">
          <div className="absolute left-[7px] flex items-center">
            <PeopleIcon size={17} />
            <button aria-label="Hilfe" className="ml-3 grid size-4 place-items-center rounded-full bg-[#13a0ec] leading-4 font-bold">?</button>
            <button aria-label="Schnellzugriff anpassen" className="ml-[22px]"><Caret light /></button>
          </div>
          <h1 className="font-bold text-[#a0a0a0]">Kd. Nr. 50000 PlusFakt Factory</h1>
          <div className="absolute right-4 flex items-center gap-[34px]">
            <button aria-label="Minimieren"><svg width="10" height="9" viewBox="0 0 10 9"><path d="M1 4.500h8" stroke="#fff" /></svg></button>
            <button aria-label="Maximieren"><svg width="9" height="9" viewBox="0 0 9 9"><path d="M1 1h7v7H1z" fill="none" stroke="#fff" strokeWidth="1.200" /></svg></button>
            <button aria-label="Fenster schließen"><svg width="10" height="9" viewBox="0 0 10 9"><path d="M1 .5l8 8M9 .5l-8 8" stroke="#fff" strokeWidth="1.500" /></svg></button>
          </div>
        </div>
        <nav className="flex h-[31px]">
          <button className="w-[71px] bg-[#dedede] text-[#505050]">Belege</button>
          <button className="w-[86px]">Allgemein</button>
          <button className="w-[101px]">Im- / Export</button>
        </nav>
      </header>

      <Ribbon />

      <nav className="flex h-[41px] border-t-2 border-[#b4b4b4] bg-[#f1f1f1] pt-px pl-[3px]">
        <PageTab className="w-[445px] border-r border-l" icon={<PeopleIcon size={24} />} num="1" label="Kunde: 50000|PlusFakt Factory" />
        <PageTab className="w-[252px] border-r" icon={<MoneyIcon size={24} />} num="2" label="Belege" badge="104" badgeClass="right-[6px]" active />
        <PageTab className="w-[313px] border-r-2" icon={<MailIcon />} num="3" label="Briefe/Dateien" badge="10" badgeClass="right-[10px]" />
        <PageTab className="w-[289px] border-r-2" icon={<CarIcon />} num="4" label="Einlagerung" badge="1" badgeClass="right-[14px]" />
        <PageTab className="flex-1 border-r" icon={<ChartIcon size={24} />} label="Statistik" />
      </nav>

      <main className="ml-[2px] flex flex-1 flex-col border-b-2 border-l-2 border-[#b4b4b4]">
        <div className="h-[34px] border-b border-[#d0d0d0] bg-white pl-[5px] leading-[35px] text-[#9a9a9a]">
          Ziehen Sie eine Spaltenüberschrift in diesen Bereich, um nach dieser zu gruppieren
        </div>
        <BelegGrid />
        <table className="w-full table-fixed border-separate border-spacing-0 border-t border-[#d0d0d0]">
          <MainCols />
          <tbody>
            <tr className={`h-[31px] text-right text-[#3c3c3c] ${strong}`}>
              <td colSpan={8} />
              <td className="pr-[6px]">41.342....</td>
              <td className="pr-[6px]">49.197.909...</td>
              <td className="pr-[6px]">17,00 €</td>
              <td className="pr-[6px]">5.382,1...</td>
              <td className="pr-[6px]">49.192.5...</td>
              <td />
            </tr>
          </tbody>
        </table>
        <Navigator text="Datensatz 14 von 104" pad="px-[11px]" thumb="w-[415px]" />
        <div className="h-[11px] border-t border-[#b4b4b4]" />
        <div className="flex flex-1 border-t border-[#b4b4b4]">
          <div className="flex min-w-0 flex-1 flex-col bg-white">
            <DetailGrid />
            <div className="mt-auto">
              <Navigator text="Datensatz 1 von 2" pad="px-[7px]" dim thumb="w-[594px]" />
            </div>
          </div>
          <SummenPanel />
        </div>
      </main>

      <footer className="flex h-[27px] items-center border-b border-[#b4b4b4] bg-[#464646] pr-1 pl-[7px] text-white">
        <PeopleIcon size={17} />
        <span className="ml-1 font-bold">Kunde Nr. 50000 PlusFakt Factory, Züsch</span>
        <span className="ml-auto flex items-center gap-[5px]">
          <MoneyIcon size={16} />
          <span>Offen: <b className="text-[13px]">24.590.860,79 €</b></span>
        </span>
        <button className="ml-[14px] flex items-center gap-[6px]">
          <DoorIcon />
          Schließen
          <Caret light />
        </button>
        <svg width="11" height="11" viewBox="0 0 11 11" className="mb-1 ml-[9px] self-end">
          <path d="M8 0h2v2H8zM4 4h2v2H4zM8 4h2v2H8zM0 8h2v2H0zM4 8h2v2H4zM8 8h2v2H8z" fill="#a0a0a0" />
        </svg>
      </footer>

      <StornoDialog />
      <Step n={1} className="top-[280px] left-[129px]" />
      <Step n={2} className="top-[66px] left-[327px]" />
      <Step n={3} className="top-[380px] left-[877px]" />
      <Step n={4} className="top-[493px] left-[389px]" />
      <Step n={5} className="top-[537px] left-[829px]" />
    </div>
  );
}
